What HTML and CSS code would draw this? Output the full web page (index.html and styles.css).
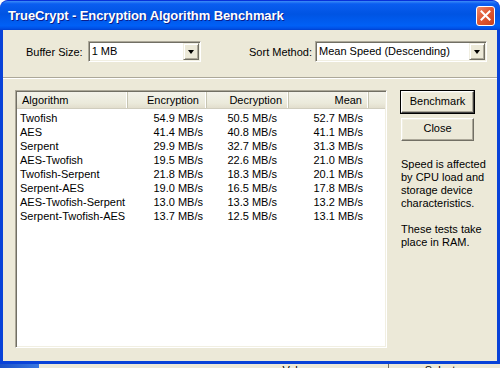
FILE: index.html
```html
<!DOCTYPE html>
<html lang="en">
<head>
    <title>TrueCrypt - Encryption Algorithm Benchmark</title>
    <link rel="stylesheet" href="styles.css">
</head>
<body>
<div class="window">
    <div class="titlebar">
        <span class="title-text">TrueCrypt - Encryption Algorithm Benchmark</span>
        <span class="close-btn">
            <svg width="11" height="11" viewBox="0 0 11 11">
                <path d="M1.5 1.5 L9.5 9.5 M9.5 1.5 L1.5 9.5" stroke="#fff" stroke-width="2" stroke-linecap="square"/>
            </svg>
        </span>
    </div>
    <div class="dialog">
        <div class="options">
            <div class="option buffer">
                <label>Buffer Size:</label>
                <div class="combo combo-buffer">
                    <span class="combo-value">1 MB</span>
                    <span class="combo-arrow"><i></i></span>
                </div>
            </div>
            <div class="option sort">
                <label>Sort Method:</label>
                <div class="combo combo-sort">
                    <span class="combo-value">Mean Speed (Descending)</span>
                    <span class="combo-arrow"><i></i></span>
                </div>
            </div>
        </div>
        <div class="separator"></div>
        <div class="main">
            <div class="listview">
                <div class="list-head">
                    <div class="hcell h-alg">Algorithm</div>
                    <div class="hcell h-enc">Encryption</div>
                    <div class="hcell h-dec">Decryption</div>
                    <div class="hcell h-mean">Mean</div>
                    <div class="hcell h-fill"></div>
                </div>
                <div class="list-body">
                    <div class="row"><span>Twofish</span><span class="enc">54.9 MB/s</span><span class="dec">50.5 MB/s</span><span class="mean">52.7 MB/s</span></div>
                    <div class="row"><span>AES</span><span class="enc">41.4 MB/s</span><span class="dec">40.8 MB/s</span><span class="mean">41.1 MB/s</span></div>
                    <div class="row"><span>Serpent</span><span class="enc">29.9 MB/s</span><span class="dec">32.7 MB/s</span><span class="mean">31.3 MB/s</span></div>
                    <div class="row"><span>AES-Twofish</span><span class="enc">19.5 MB/s</span><span class="dec">22.6 MB/s</span><span class="mean">21.0 MB/s</span></div>
                    <div class="row"><span>Twofish-Serpent</span><span class="enc">21.8 MB/s</span><span class="dec">18.3 MB/s</span><span class="mean">20.1 MB/s</span></div>
                    <div class="row"><span>Serpent-AES</span><span class="enc">19.0 MB/s</span><span class="dec">16.5 MB/s</span><span class="mean">17.8 MB/s</span></div>
                    <div class="row"><span>AES-Twofish-Serpent</span><span class="enc">13.0 MB/s</span><span class="dec">13.3 MB/s</span><span class="mean">13.2 MB/s</span></div>
                    <div class="row"><span>Serpent-Twofish-AES</span><span class="enc">13.7 MB/s</span><span class="dec">12.5 MB/s</span><span class="mean">13.1 MB/s</span></div>
                </div>
            </div>
            <div class="side">
                <div class="btn default">Benchmark</div>
                <div class="btn">Close</div>
                <p class="note">Speed is affected by CPU load and storage device characteristics.</p>
                <p class="note">These tests take place in RAM.</p>
            </div>
        </div>
    </div>
</div>
<div class="under">
    <span class="under-blue"></span>
    <span class="under-text vol">Volume Tools...</span>
    <span class="under-sep"></span>
    <span class="under-text dev">Select Device...</span>
</div>
</body>
</html>
```
FILE: styles.css
```css
html, body {
    margin: 0;
    width: 500px;
    height: 368px;
    overflow: hidden;
    background-color: #fff;
    font-family: 'Liberation Sans', Arial, sans-serif;
    font-size: 11px;
    color: #000;
}

.window {
    height: 364px;
    display: flex;
    flex-direction: column;
    box-sizing: border-box;
    border-radius: 8px 8px 0 0;
    background-color: #0842D8;
    border-top: 1px solid #0831D9;
}

.titlebar {
    height: 29px;
    display: flex;
    align-items: center;
    justify-content: space-between;
    padding: 0 5px 0 8px;
    border-radius: 8px 8px 0 0;
    background: linear-gradient(#3C8CF7 0%, #0A5DF0 10%, #0054E3 45%, #0060F6 85%, #0052E8 94%, #0040D0 100%);
}

.title-text {
    color: #fff;
    font-weight: bold;
    font-size: 13px;
    letter-spacing: -0.1px;
    text-shadow: 1px 1px 0 #0A1E8C;
}

.close-btn {
    width: 19px;
    height: 20px;
    box-sizing: border-box;
    border: 1px solid #fff;
    border-radius: 3px;
    background: linear-gradient(135deg, #F08A6A 0%, #E05A35 45%, #C8401C 100%);
    display: flex;
    align-items: center;
    justify-content: center;
}

.dialog {
    flex: 1;
    margin: 0 3px 3px 3px;
    background-color: #ECE9D8;
    display: flex;
    flex-direction: column;
}

.options {
    height: 47px;
    box-sizing: border-box;
    padding-top: 11px;
    display: flex;
    align-items: flex-start;
}

.option {
    display: flex;
    align-items: center;
}

.option label {
    margin-right: 5px;
}

.buffer {
    margin-left: 23px;
}

.sort {
    margin-left: auto;
    margin-right: 10px;
}

.sort label {
    margin-right: 3px;
}

.combo {
    height: 21px;
    box-sizing: border-box;
    display: flex;
    align-items: stretch;
    background-color: #fff;
    border: 1px solid;
    border-color: #ACA899 #fff #fff #ACA899;
    box-shadow: inset 1px 1px 0 #716F64, inset -1px -1px 0 #F1EFE2;
    padding: 1px;
}

.combo-buffer {
    width: 113px;
}

.combo-sort {
    width: 172px;
}

.combo-value {
    flex: 1;
    padding-left: 2px;
    line-height: 17px;
}

.combo-arrow {
    width: 16px;
    box-sizing: border-box;
    background-color: #ECE9D8;
    border: 1px solid;
    border-color: #F1EFE2 #716F64 #716F64 #F1EFE2;
    box-shadow: inset 1px 1px 0 #fff, inset -1px -1px 0 #ACA899;
    display: flex;
    align-items: center;
    justify-content: center;
}

.combo-arrow i {
    width: 0;
    height: 0;
    border-left: 3.5px solid transparent;
    border-right: 3.5px solid transparent;
    border-top: 4px solid #000;
}

.separator {
    border-top: 1px solid #ACA899;
    border-bottom: 1px solid #fff;
}

.main {
    flex: 1;
    display: flex;
    padding: 11px 0 0 12px;
}

.listview {
    width: 372px;
    height: 258px;
    box-sizing: border-box;
    background-color: #fff;
    border: 1px solid;
    border-color: #ACA899 #fff #fff #ACA899;
    box-shadow: inset 1px 1px 0 #716F64, inset -1px -1px 0 #F1EFE2;
    padding: 1px;
}

.list-head {
    display: grid;
    grid-template-columns: 111px 79px 82px 80px 1fr;
    height: 16px;
    background: linear-gradient(#F3F2EA, #EBEADB 70%, #E2DECD);
    border-bottom: 1px solid #D0CDBE;
}

.hcell {
    line-height: 16px;
    border-right: 1px solid #C7C5B2;
    box-shadow: inset -1px 0 0 #fff;
}

.h-alg {
    padding-left: 5px;
}

.h-enc {
    text-align: right;
    padding-right: 7px;
}

.h-dec {
    text-align: right;
    padding-right: 6px;
}

.h-mean {
    text-align: right;
    padding-right: 6px;
}

.h-fill {
    border-right: none;
    box-shadow: none;
}

.list-body {
    padding-top: 2px;
}

.row {
    display: grid;
    grid-template-columns: 111px 79px 82px 80px;
    height: 14px;
    line-height: 14px;
}

.row span:first-child {
    padding-left: 3px;
}

.row .enc {
    text-align: right;
    padding-right: 4px;
}

.row .dec {
    text-align: right;
    padding-right: 12px;
}

.row .mean {
    text-align: right;
    padding-right: 6px;
}

.side {
    margin-left: 14px;
    width: 90px;
}

.btn {
    width: 73px;
    height: 23px;
    box-sizing: border-box;
    line-height: 19px;
    text-align: center;
    background-color: #ECE9D8;
    border: 1px solid;
    border-color: #fff #716F64 #716F64 #fff;
    box-shadow: inset -1px -1px 0 #ACA899, inset 1px 1px 0 #F1EFE2;
    margin-bottom: 5px;
}

.btn.default {
    outline: 1px solid #000;
    outline-offset: 0;
    border-color: #fff #404040 #404040 #fff;
    margin-top: 1px;
    height: 22px;
    line-height: 18px;
}

.note {
    margin: 0;
    line-height: 13px;
}

.note:first-of-type {
    margin-top: 17px;
    margin-bottom: 13px;
}

.under {
    height: 4px;
    display: flex;
    background-color: #ECE9D8;
    overflow: hidden;
    line-height: 13px;
    color: #000;
}

.under-blue {
    width: 40px;
    background: linear-gradient(90deg, #1A50C8, #3A78E0);
}

.under-text.vol {
    margin-left: 243px;
}

.under-sep {
    width: 1px;
    background-color: #716F64;
    margin-left: 32px;
}

.under-text.dev {
    margin-left: 36px;
}
```
